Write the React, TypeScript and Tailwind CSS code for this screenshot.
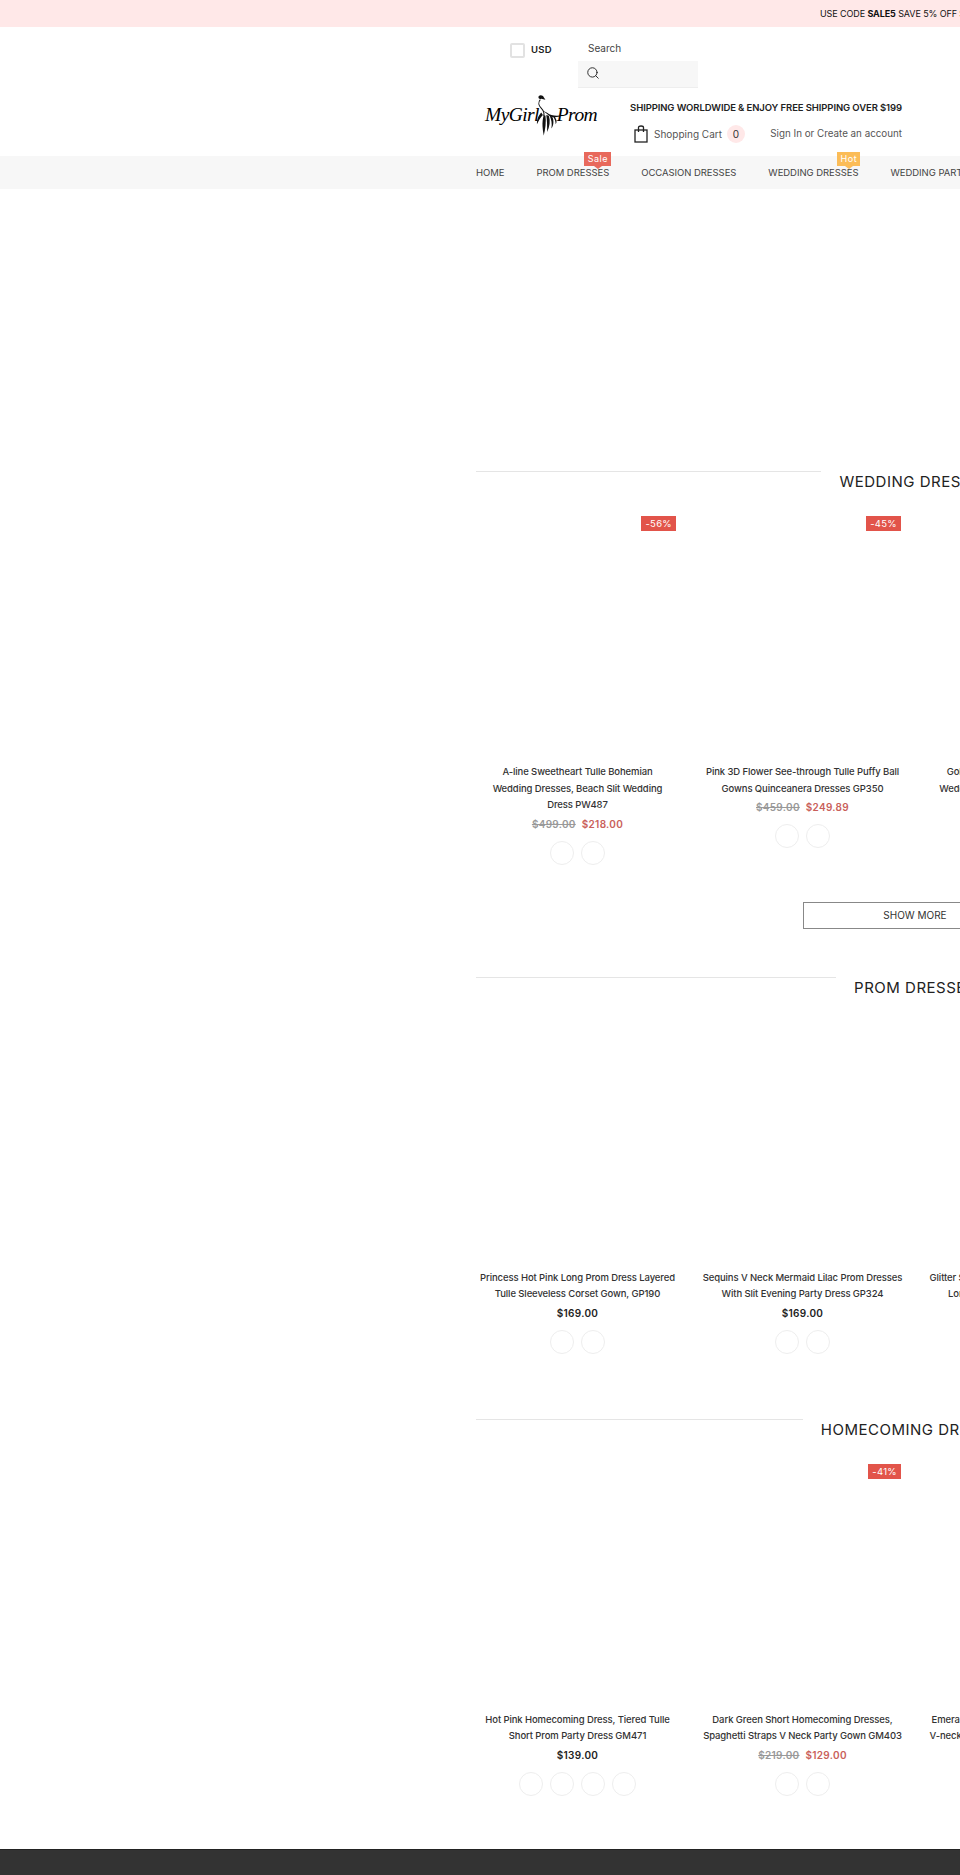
import { Search } from "lucide-react";

type Product = {
  title: string[];
  price: string;
  oldPrice?: string;
  badge?: string;
  swatches: number;
};

const weddingDresses: Product[] = [
  {
    title: ["A-line Sweetheart Tulle Bohemian", "Wedding Dresses, Beach Slit Wedding", "Dress PW487"],
    price: "$218.00",
    oldPrice: "$499.00",
    badge: "-56%",
    swatches: 2,
  },
  {
    title: ["Pink 3D Flower See-through Tulle Puffy Ball", "Gowns Quinceanera Dresses GP350"],
    price: "$249.89",
    oldPrice: "$459.00",
    badge: "-45%",
    swatches: 2,
  },
  {
    title: ["Gold Sequin Tulle Mermaid Backless", "Wedding Dress Long Train Gown GP512"],
    price: "$199.00",
    swatches: 2,
  },
];

const promDresses: Product[] = [
  {
    title: ["Princess Hot Pink Long Prom Dress Layered", "Tulle Sleeveless Corset Gown, GP190"],
    price: "$169.00",
    swatches: 2,
  },
  {
    title: ["Sequins V Neck Mermaid Lilac Prom Dresses", "With Slit Evening Party Dress GP324"],
    price: "$169.00",
    swatches: 2,
  },
  {
    title: ["Glitter Sequins Mermaid Long Prom Dresses", "Long Sleeves Evening Gown GP298"],
    price: "$169.00",
    swatches: 2,
  },
];

const homecomingDresses: Product[] = [
  {
    title: ["Hot Pink Homecoming Dress, Tiered Tulle", "Short Prom Party Dress GM471"],
    price: "$139.00",
    swatches: 4,
  },
  {
    title: ["Dark Green Short Homecoming Dresses,", "Spaghetti Straps V Neck Party Gown GM403"],
    price: "$129.00",
    oldPrice: "$219.00",
    badge: "-41%",
    swatches: 2,
  },
  {
    title: ["Emerald Green Sequin Homecoming Dress,", "V-neck Sequined Short Party Gown, GM388"],
    price: "$139.00",
    swatches: 2,
  },
];

const DressMark = () => (
  <svg viewBox="0 0 40 50" className="w-[34px] h-[52px] -mx-[8px] shrink-0" fill="none">
    <path d="M9 3c2-2 5-1 6 1l2 3-5-1c-2 1-4-1-3-3z" fill="#111" />
    <path d="M11 7c-3 3-2 7 1 10 2 2 4 5 3 9" stroke="#111" strokeWidth="1.2" />
    <path d="M13 19c4 2 8 5 11 6 4 1 9 1 13 0-5 3-10 3-14 2z" fill="#111" />
    <path d="M12 22c-4 5-5 8-5 14 2-4 4-8 7-11z" fill="#111" />
    <path d="M15 25c-2 7-2 14 0 24 2-8 3-16 2-23z" fill="#111" />
    <path d="M18 25c1 7 1 13 1 20 3-6 4-13 2-19z" fill="#111" />
    <path d="M22 26c2 5 3 9 2 15 3-4 3-10 1-14z" fill="#111" />
    <path d="M26 27c2 3 3 5 3 9 2-3 1-6-1-9z" fill="#111" />
  </svg>
);

const Logo = () => (
  <div className="flex items-center w-[154px] h-[50px] pl-[9px] text-black italic font-['Liberation_Serif',serif] text-[19.5px] tracking-[-0.6px]">
    <span>MyGirl</span>
    <DressMark />
    <span>Prom</span>
  </div>
);

const SectionTitle = ({ title }: { title: string }) => (
  <div className="flex items-start gap-[18px] px-[11px] h-[20px]">
    <div className="flex-1 h-px bg-[#e5e5e5]" />
    <h2 className="mt-[2px] text-[15px] leading-[18px] tracking-[0.5px] text-[#222] whitespace-nowrap">{title}</h2>
    <div className="flex-1 h-px bg-[#e5e5e5]" />
  </div>
);

const ProductCard = ({ product }: { product: Product }) => (
  <div className="px-[11px] text-center">
    <div className="relative h-[273px]">
      {product.badge && (
        <span className="absolute right-[3px] top-[25px] h-[15px] px-[4px] bg-[#e2544a] text-white text-[9.5px] leading-[15px] tracking-[0.3px]">
          {product.badge}
        </span>
      )}
    </div>
    <div className="text-[9.5px] leading-[16.5px] font-medium tracking-[-0.1px] text-[#333]">
      {product.title.map((line) => (
        <div key={line} className="whitespace-nowrap">
          {line}
        </div>
      ))}
    </div>
    <div className="flex justify-center gap-[6px] h-[21px] items-center text-[10px] font-semibold tracking-[0.3px]">
      {product.oldPrice && <span className="text-[#999] line-through">{product.oldPrice}</span>}
      <span className={product.oldPrice ? "text-[#c9605a]" : "text-[#222]"}>{product.price}</span>
    </div>
    <div className="flex justify-center gap-[7px] mt-[6px]">
      {Array.from({ length: product.swatches }).map((_, i) => (
        <span key={i} className="w-[24px] h-[24px] rounded-full border border-[#eeeeee]" />
      ))}
    </div>
  </div>
);

const ProductGrid = ({ products }: { products: Product[] }) => (
  <div className="grid grid-cols-[225px_225px_225px_225px]">
    {products.map((p) => (
      <ProductCard key={p.title[0]} product={p} />
    ))}
  </div>
);

export default function App() {
  return (
    <div className="w-[960px] h-[1875px] overflow-hidden bg-white font-['Inter',sans-serif] text-[#333]">
      <div className="h-[27px] bg-[#ffe8e8] pl-[820px] text-[9px] leading-[27px] tracking-[-0.1px] text-[#111] whitespace-nowrap">
        USE CODE <b className="font-bold">SALE5</b> SAVE 5% OFF SITEWIDE
      </div>

      <header className="h-[129px] pl-[476px] w-[902px]">
        <div className="flex pl-[34px] pt-[15px] h-[63px]">
          <div className="flex items-center gap-[6px] h-[16px] w-[68px]">
            <span className="w-[15px] h-[15px] border-2 border-[#e2e2e2] rounded-[2px]" />
            <span className="text-[9.5px] font-semibold tracking-[0.3px] text-[#222]">USD</span>
          </div>
          <div className="w-[120px]">
            <div className="pl-[10px] text-[10px] leading-[12px] text-[#444]">Search</div>
            <div className="mt-[7px] h-[27px] bg-[#f7f7f7] border-b border-[#eeeeee] flex items-center pl-[8px] pb-[2px]">
              <Search size={14} strokeWidth={1.6} color="#222" />
            </div>
          </div>
        </div>
        <div className="flex">
          <Logo />
          <div className="flex-1 flex flex-col items-end">
            <div className="mt-[11px] text-[9.5px] leading-[14px] font-semibold text-[#222] tracking-[-0.1px] whitespace-nowrap">
              SHIPPING WORLDWIDE &amp; ENJOY FREE SHIPPING OVER $199
            </div>
            <div className="mt-[10px] flex items-center w-[268px] text-[10px] text-[#555]">
              <svg viewBox="0 0 14 18" className="w-[14px] h-[18px]" fill="none" stroke="#222" strokeWidth="1.3">
                <rect x="1" y="5" width="12" height="12" />
                <path d="M4.5 7V2.5C4.5 1.5 5.5 1 7 1s2.5.5 2.5 1.5V7" />
              </svg>
              <span className="ml-[6px]">Shopping Cart</span>
              <span className="ml-[5px] w-[18px] h-[18px] rounded-full bg-[#ffe8e8] text-[#333] text-center leading-[18px]">0</span>
              <span className="ml-auto text-[9.8px] whitespace-nowrap">Sign In or Create an account</span>
            </div>
          </div>
        </div>
      </header>

      <nav className="h-[33px] bg-[#f7f7f7] pl-[476px] pt-[1px] flex items-center gap-[32px] text-[9.5px] tracking-[-0.05px] text-[#444] whitespace-nowrap">
        <span>HOME</span>
        <span className="relative">
          PROM DRESSES
          <span className="absolute left-[48px] -top-[14px] w-[27px] h-[14px] bg-[#e8695c] text-white text-[9px] leading-[14px] text-center tracking-[0.5px]">
            Sale
            <span className="absolute left-[10px] top-[14px] border-x-[4px] border-x-transparent border-t-[3px] border-t-[#e8695c]" />
          </span>
        </span>
        <span>OCCASION DRESSES</span>
        <span className="relative">
          WEDDING DRESSES
          <span className="absolute left-[69px] -top-[14px] w-[23px] h-[14px] bg-[#fbbc57] text-white text-[9px] leading-[14px] text-center tracking-[0.5px]">
            Hot
            <span className="absolute left-[8px] top-[14px] border-x-[4px] border-x-transparent border-t-[3px] border-t-[#fbbc57]" />
          </span>
        </span>
        <span>WEDDING PARTY</span>
      </nav>

      <main className="ml-[465px] w-[900px] pt-[282px]">
        <section>
          <SectionTitle title="WEDDING DRESSES" />
          <ProductGrid products={weddingDresses} />
          <div className="flex justify-center mt-[37px]">
            <button className="w-[224px] h-[27px] border border-[#888] text-[10px] text-[#333]">SHOW MORE</button>
          </div>
        </section>

        <section className="mt-[48px]">
          <SectionTitle title="PROM DRESSES" />
          <ProductGrid products={promDresses} />
        </section>

        <section className="mt-[65px]">
          <SectionTitle title="HOMECOMING DRESSES" />
          <ProductGrid products={homecomingDresses} />
        </section>
      </main>

      <footer className="mt-[53px] h-[26px] bg-[#333333] border-t border-[#222]" />
    </div>
  );
}
